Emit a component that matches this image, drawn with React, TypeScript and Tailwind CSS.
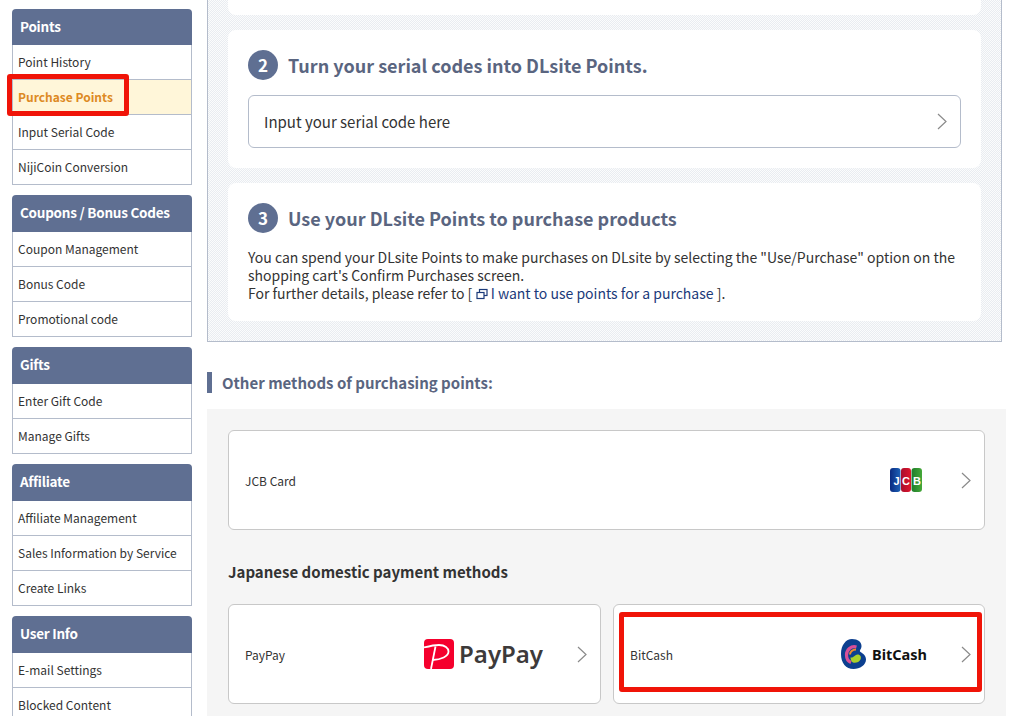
const font = { fontFamily: '"Noto Sans CJK JP", "Noto Sans", sans-serif' };

const groups = [
  { title: "Points", items: ["Point History", "Purchase Points", "Input Serial Code", "NijiCoin Conversion"] },
  { title: "Coupons / Bonus Codes", items: ["Coupon Management", "Bonus Code", "Promotional code"] },
  { title: "Gifts", items: ["Enter Gift Code", "Manage Gifts"] },
  { title: "Affiliate", items: ["Affiliate Management", "Sales Information by Service", "Create Links"] },
  { title: "User Info", items: ["E-mail Settings", "Blocked Content"] },
];

function Sidebar() {
  return (
    <aside className="w-[180px] shrink-0 flex flex-col gap-[10px] pt-[9px]">
      {groups.map((g, gi) => (
        <div key={g.title}>
          <div
            className={`${gi === 0 ? "h-[36px]" : "h-[37px]"} bg-[#5f6f92] rounded-t-[4px] px-2 pb-[2px] flex items-center text-white text-[13.5px] font-bold tracking-[-0.25px]`}
          >
            {g.title}
          </div>
          <ul className="border-x border-[#b4bccb]">
            {g.items.map((item) => {
              const active = item === "Purchase Points";
              return (
                <li
                  key={item}
                  className={`h-[35px] px-[5px] flex items-center text-[12px] border-b border-[#b4bccb] ${
                    active ? "bg-[#fff6d9] text-[#dd8a24] font-bold" : "bg-white text-[#333]"
                  }`}
                >
                  {item}
                </li>
              );
            })}
          </ul>
        </div>
      ))}
    </aside>
  );
}

function StepNumber({ n }: { n: number }) {
  return (
    <span className="w-[30px] h-[30px] rounded-full bg-[#5f6f92] text-white text-[17px] font-bold flex items-center justify-center">
      {n}
    </span>
  );
}

function Chevron() {
  return (
    <svg className="shrink-0" width="10" height="17" viewBox="0 0 10 17" fill="none" stroke="#8a8a8a" strokeWidth="1.2">
      <path d="M1 1 L9 8.5 L1 16" />
    </svg>
  );
}

function JcbLogo() {
  return (
    <svg className="mr-[5px]" width="32" height="24" viewBox="0 0 32 24">
      <defs>
        <linearGradient id="jcbBlue" x1="0" y1="0" x2="1" y2="0">
          <stop offset="0" stopColor="#0a2a80" />
          <stop offset="1" stopColor="#1c62b8" />
        </linearGradient>
        <linearGradient id="jcbRed" x1="0" y1="0" x2="1" y2="0">
          <stop offset="0" stopColor="#a80f2c" />
          <stop offset="1" stopColor="#e0142c" />
        </linearGradient>
        <linearGradient id="jcbGreen" x1="0" y1="0" x2="1" y2="0">
          <stop offset="0" stopColor="#1f7c2c" />
          <stop offset="1" stopColor="#45a838" />
        </linearGradient>
      </defs>
      <rect x="0" y="0" width="10.5" height="24" rx="3" fill="url(#jcbBlue)" />
      <rect x="11" y="0" width="10" height="24" rx="3" fill="url(#jcbRed)" />
      <rect x="21.5" y="0" width="10.5" height="24" rx="3" fill="url(#jcbGreen)" />
      <text x="3.5" y="16.5" fontSize="11" fontWeight="700" fill="#fff" fontFamily="Liberation Sans">J</text>
      <text x="12" y="16.5" fontSize="11" fontWeight="700" fill="#fff" fontFamily="Liberation Sans">C</text>
      <text x="23" y="16.5" fontSize="11" fontWeight="700" fill="#fff" fontFamily="Liberation Sans">B</text>
    </svg>
  );
}

function PayPayLogo() {
  return (
    <div className="flex items-center gap-[5px]">
      <svg width="30" height="30" viewBox="0 0 30 30">
        <rect width="30" height="30" rx="4" fill="#f5002d" />
        <path d="M0 8.5 C6 7 11 6 15 6 C21 6 24.5 9 24.5 12.5 C24.5 17.5 17 20.5 8.5 21" fill="none" stroke="#fff" strokeWidth="1.8" />
        <path d="M11.5 7.5 L7 30" fill="none" stroke="#fff" strokeWidth="1.8" />
      </svg>
      <span className="text-[24px] leading-none font-semibold text-[#3d3a3a]" style={{ fontFamily: '"Noto Sans", sans-serif' }}>
        PayPay
      </span>
    </div>
  );
}

function BitCashLogo() {
  return (
    <div className="flex items-center gap-[6px]">
      <svg width="25" height="30" viewBox="0 0 25 30">
        <path d="M11 0 C17 0 20.5 3 20.5 7 C20.5 10 18.5 11 19 12.5 C20 14 25 15 25 20.5 C25 26 19 30 12.5 30 C5 30 0 24 0 15 C0 6 5 0 11 0 Z" fill="#0c3f8f" />
        <path d="M15.5 8 C10 6.5 5.5 11 5.5 16 C5.5 20 7.5 22.5 10 23.5" fill="none" stroke="#d84f9a" strokeWidth="3.2" />
        <path d="M15 10.5 C11.5 10.5 9 13 9 15.5" fill="none" stroke="#f08a2c" strokeWidth="2" />
        <path d="M9.5 18.5 C13 19 14 15.5 16.5 15.5 C19.5 15.5 20.5 18 19.5 20.5 C18.5 23 14.5 24.5 12 23.5 C10.5 23 9.5 20.5 9.5 18.5 Z" fill="#a9cf2a" />
      </svg>
      <span className="text-[14.5px] font-bold text-[#111] leading-none" style={{ fontFamily: '"Noto Sans", sans-serif' }}>
        BitCash
      </span>
    </div>
  );
}

function PayCard({ label, logo, className }: { label: string; logo: React.ReactNode; className: string }) {
  return (
    <div className={`bg-white border border-[#c8c8c8] rounded-[6px] h-[100px] flex items-center pl-[16px] pr-[13px] gap-[34px] ${className}`}>
      <span className="text-[12px] text-[#333] flex-1 pt-[2px]">{label}</span>
      {logo}
      <Chevron />
    </div>
  );
}

export default function App() {
  return (
    <div className="relative h-[716px] w-[1035px] overflow-hidden bg-white flex pl-[12px]" style={font}>
      <Sidebar />
      <main className="ml-[15px] w-[799px] shrink-0 text-[#333]">
        <section className="w-[795px] h-[342px] border-x border-b border-[#b4bccb] bg-[repeating-conic-gradient(#e9ecf1_0_25%,#fbfcfc_0_50%)] bg-[length:2px_2px] px-[20px] flex flex-col gap-[15px]">
          <div className="h-[15px] bg-white rounded-b-[8px]" />
          <div className="h-[138px] bg-white rounded-[8px] px-[20px] pt-[20px]">
            <div className="flex items-center gap-[10px]">
              <StepNumber n={2} />
              <h2 className="text-[18px] font-bold text-[#5a6580] leading-[30px]">Turn your serial codes into DLsite Points.</h2>
            </div>
            <div className="mt-[15px] h-[53px] border border-[#b4bccb] rounded-[6px] pl-[15px] pr-[13px] flex items-center justify-between">
              <span className="text-[15px] pt-[2px]">Input your serial code here</span>
              <Chevron />
            </div>
          </div>
          <div className="h-[138px] bg-white rounded-[8px] px-[20px] pt-[20px]">
            <div className="flex items-center gap-[10px]">
              <StepNumber n={3} />
              <h2 className="text-[18px] font-bold text-[#5a6580] leading-[30px]">Use your DLsite Points to purchase products</h2>
            </div>
            <p className="mt-[15px] text-[14px] leading-[18px]">
              You can spend your DLsite Points to make purchases on DLsite by selecting the "Use/Purchase" option on the
              <br />
              shopping cart's Confirm Purchases screen.
              <br />
              For further details, please refer to [{" "}
              <svg className="inline-block align-[-1px]" width="12" height="12" viewBox="0 0 12 12" fill="none" stroke="#1b3a7a" strokeWidth="1.2">
                <rect x="3.5" y="1.5" width="7.5" height="6" />
                <rect x="1" y="4.5" width="7" height="6" fill="#fff" />
              </svg>{" "}
              <span className="text-[#1b3a7a]">I want to use points for a purchase</span> ].
            </p>
          </div>
        </section>

        <h3 className="mt-[30px] h-[21px] border-l-[5px] border-[#5f6f92] pl-[10px] text-[15px] font-bold text-[#5a6580] leading-[21px]">
          Other methods of purchasing points:
        </h3>

        <section className="mt-[16px] bg-[#f5f5f5] px-[21px] pt-[21px] h-[400px]">
          <PayCard label="JCB Card" logo={<JcbLogo />} className="w-[757px]" />
          <h4 className="mt-[31px] text-[15px] font-bold leading-[22px] text-[#333]">Japanese domestic payment methods</h4>
          <div className="mt-[21px] flex gap-[12px]">
            <PayCard label="PayPay" logo={<PayPayLogo />} className="w-[373px]" />
            <PayCard label="BitCash" logo={<BitCashLogo />} className="w-[372px]" />
          </div>
        </section>
      </main>

      {/* red annotation boxes */}
      <div className="absolute left-[7px] top-[74px] w-[122px] h-[42px] border-[5px] border-[#f01408] rounded-[3px]" />
      <div className="absolute left-[619px] top-[612px] w-[363px] h-[80px] border-[5px] border-[#f01408] rounded-[3px]" />
    </div>
  );
}
